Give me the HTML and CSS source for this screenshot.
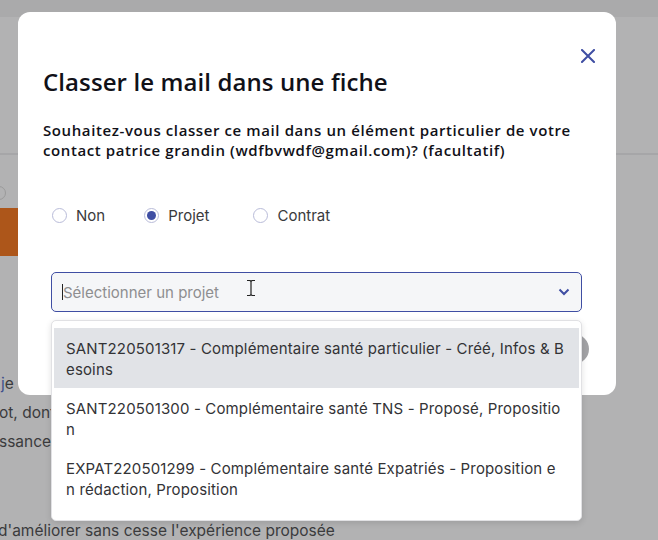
FILE: index.html
```html
<!DOCTYPE html>
<html lang="fr">
<head>
<meta charset="utf-8">
<link rel="stylesheet" href="styles.css">
</head>
<body>
<div class="page">
  <div class="page-top"></div>
  <div class="page-head"></div>
  <div class="page-body">
    <div class="bg-radio"></div>
    <div class="bg-btn"></div>
    <p class="bg-text t1"><span class="bg-link">j</span>e s</p>
    <p class="bg-text t2">ot, dont</p>
    <p class="bg-text t3">ssance</p>
    <p class="bg-text t4">d'améliorer sans cesse l'expérience proposée</p>
  </div>
</div>

<div class="modal">
  <button class="close" aria-label="Fermer">
    <svg width="14" height="14" viewBox="0 0 14 14"><path d="M1 1L13 13M13 1L1 13" stroke="#3f4ea3" stroke-width="2" stroke-linecap="square"/></svg>
  </button>
  <h1 class="title">Classer le mail dans une fiche</h1>
  <p class="question">Souhaitez-vous classer ce mail dans un élément particulier de votre contact patrice grandin (wdfbvwdf@gmail.com)? (facultatif)</p>
  <div class="radios">
    <label class="radio"><span class="dot"></span>Non</label>
    <label class="radio"><span class="dot checked"></span>Projet</label>
    <label class="radio"><span class="dot"></span>Contrat</label>
  </div>
  <div class="select-wrap">
    <div class="select">
      <span class="caret"></span>
      <span class="placeholder">Sélectionner un projet</span>
      <svg class="chev" width="12" height="8" viewBox="0 0 12 8"><path d="M1.5 1.5L6 6L10.5 1.5" fill="none" stroke="#3f4ea3" stroke-width="2"/></svg>
    </div>
    <svg class="ibeam" width="10" height="18" viewBox="0 0 10 18"><path d="M1 1.5H4L5 2.5L6 1.5H9M5 2.5V15.5M1 16.5H4L5 15.5L6 16.5H9" fill="none" stroke="#222" stroke-width="1.2"/></svg>
    <ul class="menu">
      <li class="opt active">SANT220501317 - Complémentaire santé particulier - Créé, Infos &amp; B<br>esoins</li>
      <li class="opt">SANT220501300 - Complémentaire santé TNS - Proposé, Propositio<br>n</li>
      <li class="opt">EXPAT220501299 - Complémentaire santé Expatriés - Proposition e<br>n rédaction, Proposition</li>
    </ul>
  </div>
  <div class="footer">
    <span class="btn-ghost"></span>
  </div>
</div>
</body>
</html>
```

FILE: styles.css
```css
* { box-sizing: border-box; }
html, body { margin: 0; padding: 0; }
body {
  width: 658px;
  height: 540px;
  overflow: hidden;
  background: #b2b2b3;
  font-family: "Inter", "Noto Sans", sans-serif;
  position: relative;
}
.page { width: 658px; height: 540px; overflow: hidden; }
.page-top { height: 17px; background: #aaaaab; }
.page-head { height: 138px; border-bottom: 2px solid #a6a6a8; }
.page-body { height: 383px; }
.bg-radio {
  width: 14px; height: 14px; border-radius: 50%;
  border: 1px solid #9a9a9a;
  margin: 31px 0 0 -8px;
}
.bg-btn {
  width: 120px; height: 48px; background: #ad561a;
  margin-top: 8px; border-radius: 4px; margin-left: -60px;
}
.bg-text {
  margin: 0; font-size: 15.5px; line-height: 29px; color: #3b3b3d;
  white-space: nowrap;
}
.bg-link { color: #3e4f8c; }
.t1 { margin-top: 113px; margin-left: 1px; }
.t2 { margin-left: -1px; }
.t3 { margin-left: -1px; }
.t4 { margin-top: 66px; margin-left: -2px; line-height: 18px; }

.modal {
  position: absolute;
  left: 18px; top: 12px;
  width: 598px; height: 383px;
  background: #fff;
  border-radius: 12px;
  padding: 0 33px 0 25px;
}
.close {
  position: absolute; top: 37px; right: 21px;
  background: none; border: 0; padding: 0; width: 14px; height: 14px;
  display: flex;
}
.title {
  margin: 54px 0 0;
  font-family: "Open Sans", sans-serif;
  font-weight: 600;
  font-size: 24px;
  line-height: 32px;
  color: #111118;
  letter-spacing: 0.1px;
}
.question {
  margin: 22px 0 0;
  font-family: "Open Sans", sans-serif;
  font-weight: 600;
  font-size: 15px;
  line-height: 20px;
  color: #111118;
  letter-spacing: 0.6px;
}
.radios {
  display: flex;
  margin: 45px 0 0 9px;
  height: 20px;
  align-items: center;
}
.radio {
  display: flex; align-items: center;
  font-size: 15px; color: #3a3a3c;
  margin-right: 39px;
}
.radio:nth-child(2) { margin-right: 44px; }
.dot {
  width: 15px; height: 15px; border-radius: 50%;
  border: 1px solid #b9bcd9;
  margin-right: 9px;
  display: inline-flex; align-items: center; justify-content: center;
}
.dot.checked::after {
  content: ""; width: 9px; height: 9px; border-radius: 50%; background: #3f4ea3;
}
.select-wrap {
  position: relative;
  margin: 47px 0 0 8px;
  width: 531px;
}
.select {
  height: 40px;
  border: 1px solid #3f4ea3;
  border-radius: 5px;
  background: #f5f6f8;
  display: flex; align-items: center;
  padding: 0 11px 0 10px;
}
.caret { width: 1px; height: 16px; background: #222; }
.placeholder { font-size: 15px; color: #8e8e90; flex: 1; }
.chev { flex: none; }
.ibeam { position: absolute; left: 195px; top: 7px; }
.menu {
  position: absolute;
  top: 48px; left: 0; right: 0;
  margin: 0; list-style: none;
  background: #fff;
  border: 1px solid #e1e1e4;
  border-radius: 5px;
  padding: 7px 2px 12px;
  box-shadow: 0 2px 6px rgba(0,0,0,0.12);
  z-index: 2;
}
.opt {
  font-size: 15px; line-height: 21px; color: #333336;
  padding: 10px 12px 9px;
  height: 60px;
  letter-spacing: 0.15px;
}
.opt.active { background: #e1e3e7; }
.footer {
  display: flex; justify-content: flex-end;
  margin-top: 22px;
}
.btn-ghost {
  width: 80px; height: 30px; border-radius: 15px; background: #a3a3a6;
  margin-right: -6px;
}
```
